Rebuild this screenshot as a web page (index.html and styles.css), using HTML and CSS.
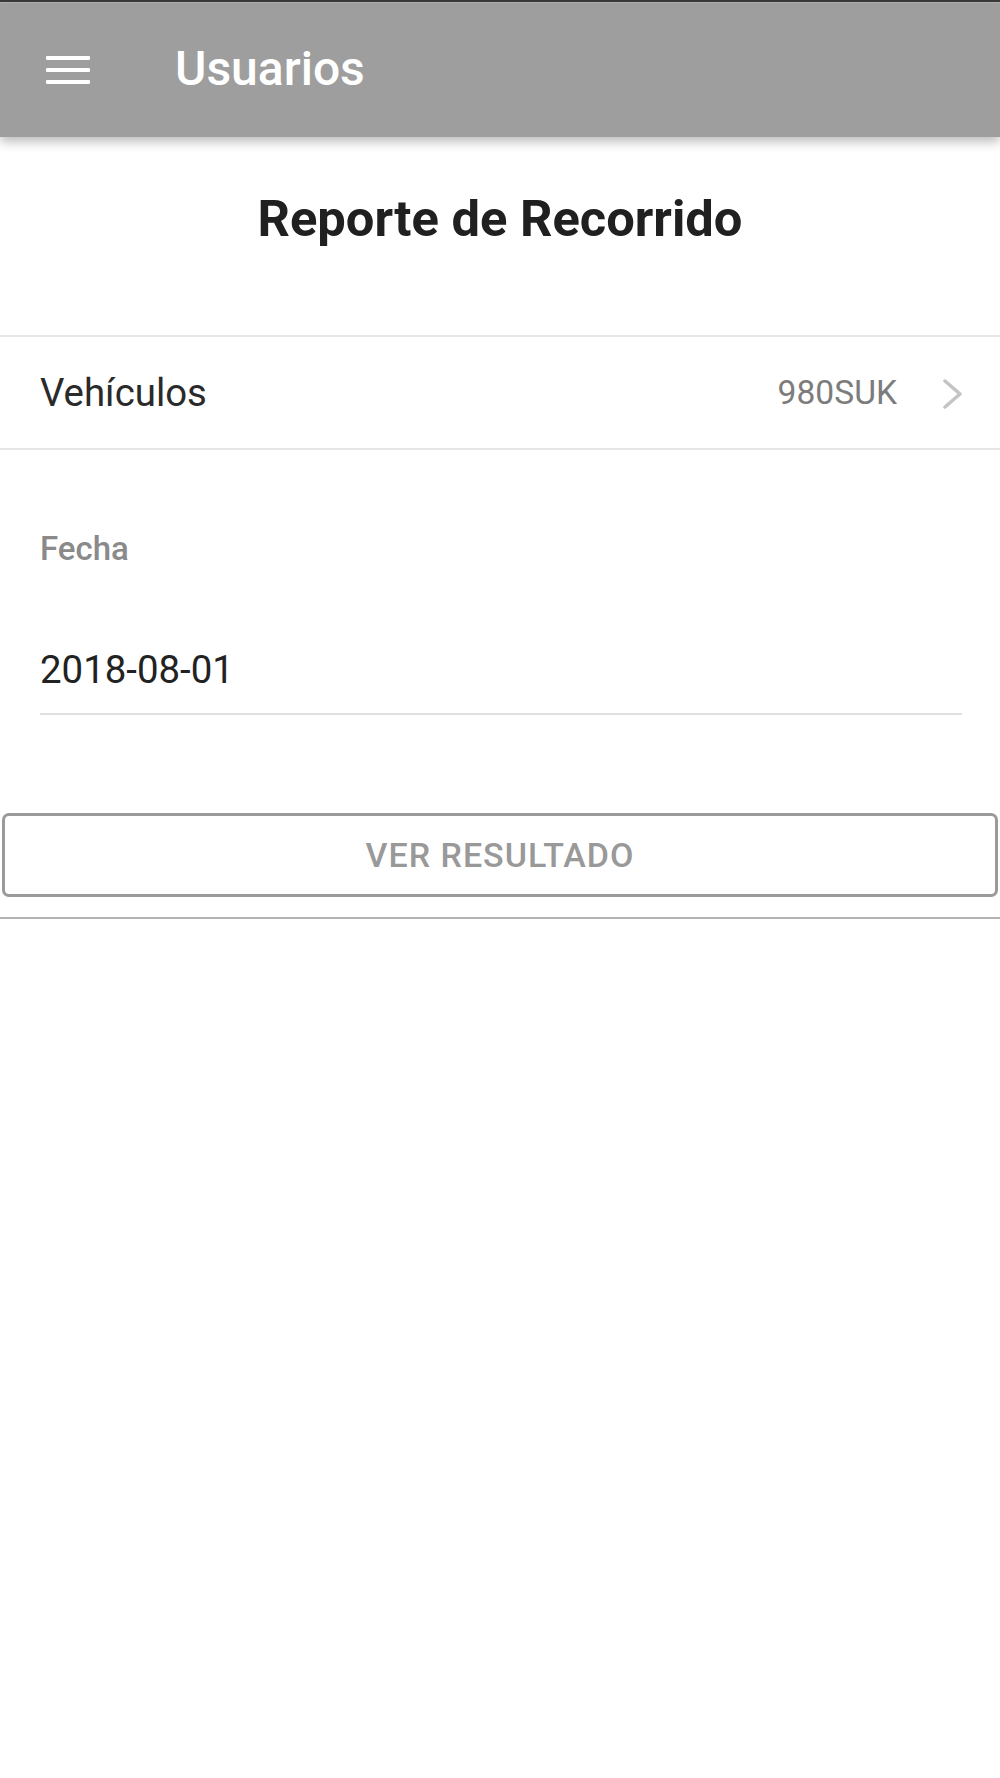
FILE: index.html
```html
<!DOCTYPE html>
<html lang="es">
<head>
<meta charset="utf-8">
<title>Usuarios</title>
<link rel="stylesheet" href="styles.css">
</head>
<body>
<div class="topline"></div>
<header class="toolbar">
  <svg class="menu-icon" width="44" height="30" viewBox="0 0 44 30">
    <rect x="0" y="1" width="44" height="4" rx="1" fill="#fff"/>
    <rect x="0" y="13" width="44" height="4" rx="1" fill="#fff"/>
    <rect x="0" y="25" width="44" height="4" rx="1" fill="#fff"/>
  </svg>
  <div class="toolbar-title">Usuarios</div>
</header>
<main class="content">
  <h2 class="page-title">Reporte de Recorrido</h2>
  <div class="item">
    <span class="item-label">Vehículos</span>
    <span class="item-value">980SUK</span>
    <svg class="chevron" width="20" height="30" viewBox="0 0 20 30">
      <polyline points="2,2 17,15 2,28" fill="none" stroke="#c4c4c4" stroke-width="3.5" stroke-linecap="round" stroke-linejoin="round"/>
    </svg>
  </div>
  <div class="field">
    <div class="field-label">Fecha</div>
    <div class="field-value">2018-08-01</div>
  </div>
  <button class="btn-outline">VER RESULTADO</button>
  <div class="bottom-line"></div>
</main>
</body>
</html>
```
FILE: styles.css
```css
html, body {
  margin: 0;
  padding: 0;
  background: #ffffff;
}
body {
  font-family: Roboto, "Liberation Sans", Arial, sans-serif;
  width: 1000px;
  min-height: 1778px;
}
.topline {
  height: 2px;
  background: #3a3a3a;
  border-bottom: 1px solid #b4b4b4;
}
.toolbar {
  position: relative;
  z-index: 1;
  height: 134px;
  background: #9e9e9e;
  display: flex;
  align-items: center;
  box-shadow: 0 5px 10px rgba(0, 0, 0, 0.26);
}
.menu-icon {
  margin-left: 46px;
  margin-top: -1px;
  flex: none;
}
.toolbar-title {
  margin-left: 85px;
  margin-top: -2px;
  color: #ffffff;
  font-size: 48px;
  font-weight: 500;
  line-height: 56px;
}
.content {
  display: flex;
  flex-direction: column;
}
.page-title {
  margin: 52px 0 86px;
  text-align: center;
  font-size: 50.7px;
  font-weight: 700;
  line-height: 60px;
  color: #202020;
}
.item {
  height: 111px;
  border-top: 2px solid #e6e6e6;
  border-bottom: 2px solid #e6e6e6;
  display: flex;
  align-items: center;
  padding: 0 37px 0 40px;
}
.item-label {
  flex: 1;
  font-size: 38.4px;
  color: #2a2a2a;
}
.item-value {
  font-size: 33.6px;
  color: #7c7c7c;
  margin-right: 46px;
}
.chevron {
  flex: none;
  margin-top: 2px;
}
.field {
  margin: 79px 38px 0 40px;
  border-bottom: 2px solid #e0e0e0;
  padding-bottom: 20px;
}
.field-label {
  font-size: 33px;
  font-weight: 500;
  line-height: 40px;
  color: #8a8a8a;
}
.field-value {
  margin-top: 78px;
  font-size: 38.4px;
  line-height: 46px;
  color: #222222;
}
.btn-outline {
  margin: 98px 2px 0 2px;
  height: 84px;
  border: 3px solid #9a9a9a;
  border-radius: 7px;
  background: #ffffff;
  font-family: Roboto, "Liberation Sans", Arial, sans-serif;
  font-size: 34px;
  font-weight: 500;
  color: #999999;
  letter-spacing: 1px;
  padding: 0;
}
.bottom-line {
  margin-top: 20px;
  height: 2px;
  background: #b4b4b4;
}
```
